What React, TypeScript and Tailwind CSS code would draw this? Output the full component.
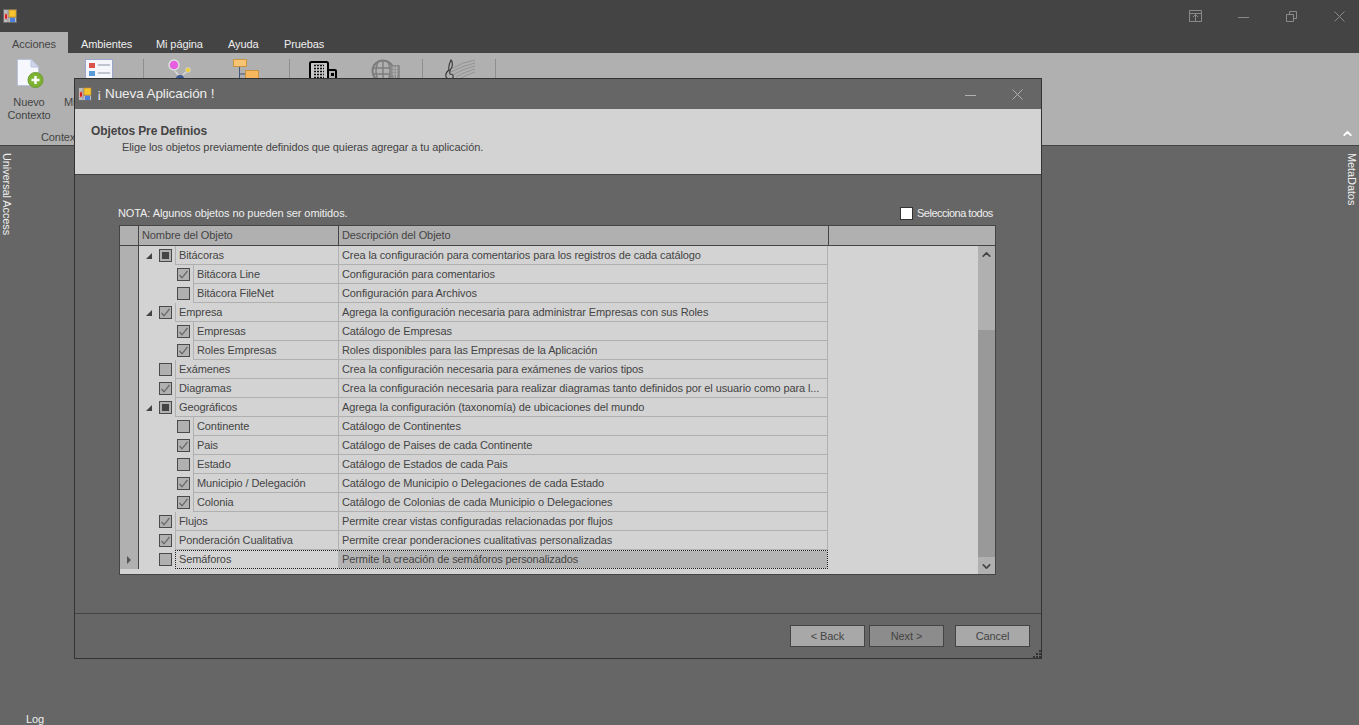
import { ChevronDown, ChevronUp } from "lucide-react";

type Check = "checked" | "mixed" | "empty";
type Row = { name: string; desc: string; level: 0 | 1; check: Check; expanded?: boolean; current?: boolean };

const rows: Row[] = [
  { name: "Bitácoras", desc: "Crea la configuración para comentarios para los registros de cada catálogo", level: 0, check: "mixed", expanded: true },
  { name: "Bitácora Line", desc: "Configuración para comentarios", level: 1, check: "checked" },
  { name: "Bitácora FileNet", desc: "Configuración para Archivos", level: 1, check: "empty" },
  { name: "Empresa", desc: "Agrega la configuración necesaria para administrar Empresas con sus Roles", level: 0, check: "checked", expanded: true },
  { name: "Empresas", desc: "Catálogo de Empresas", level: 1, check: "checked" },
  { name: "Roles Empresas", desc: "Roles disponibles para las Empresas de la Aplicación", level: 1, check: "checked" },
  { name: "Exámenes", desc: "Crea la configuración necesaria para exámenes de varios tipos", level: 0, check: "empty" },
  { name: "Diagramas", desc: "Crea la configuración necesaria para realizar diagramas tanto definidos por el usuario como para l...", level: 0, check: "checked" },
  { name: "Geográficos", desc: "Agrega la configuración (taxonomía) de ubicaciones del mundo", level: 0, check: "mixed", expanded: true },
  { name: "Continente", desc: "Catálogo de Continentes", level: 1, check: "empty" },
  { name: "Pais", desc: "Catálogo de Paises de cada Continente", level: 1, check: "checked" },
  { name: "Estado", desc: "Catálogo de Estados de cada Pais", level: 1, check: "empty" },
  { name: "Municipio / Delegación", desc: "Catálogo de Municipio o Delegaciones de cada Estado", level: 1, check: "checked" },
  { name: "Colonia", desc: "Catálogo de Colonias de cada Municipio o Delegaciones", level: 1, check: "checked" },
  { name: "Flujos", desc: "Permite crear vistas configuradas relacionadas por flujos", level: 0, check: "checked" },
  { name: "Ponderación Cualitativa", desc: "Permite crear ponderaciones cualitativas personalizadas", level: 0, check: "checked" },
  { name: "Semáforos", desc: "Permite la creación de semáforos personalizados", level: 0, check: "empty", current: true },
];

function AppIcon() {
  return (
    <svg width="14" height="14" viewBox="0 0 14 14" className="shrink-0">
      <rect width="14" height="14" fill="#bdbdbd" />
      <rect x="0.5" y="0.5" width="13" height="13" fill="none" stroke="#6c6c6c" />
      <path d="M5 1V13M1 4.5H5M1 10.5H5M5 8.5H13" stroke="#8a8a8a" strokeWidth="0.7" />
      <rect x="1.5" y="5" width="3" height="5" fill="#d3201c" stroke="#f0e0e0" strokeWidth="0.5" />
      <rect x="6" y="1" width="7" height="7" fill="#f7c52f" stroke="#b9861a" strokeWidth="0.6" />
      <rect x="7" y="9" width="5" height="4" fill="#4a80dc" />
    </svg>
  );
}

function NewDocIcon() {
  return (
    <svg width="27" height="30" viewBox="0 0 27 30">
      <path d="M.5.5H14L21.5 8V26.5H.5Z" fill="#f6f8fd" stroke="#b9c3dc" />
      <path d="M14 .5V8H21.5Z" fill="#cfd7ea" stroke="#b9c3dc" />
      <circle cx="18.5" cy="21" r="7.5" fill="#7db233" stroke="#6a9a2c" />
      <path d="M18.5 17V25M14.5 21H22.5" stroke="#fff" strokeWidth="2.4" />
    </svg>
  );
}

function ListIcon() {
  return (
    <svg width="29" height="19" viewBox="0 0 29 19">
      <rect x="0.5" y="0.5" width="27" height="24" fill="#f4f6fb" stroke="#99a6cc" />
      <rect x="4" y="4" width="6" height="5" fill="#d9534a" />
      <rect x="4" y="12" width="6" height="5" fill="#5b9bd8" />
      <path d="M13 6H25M13 14H25" stroke="#8794a8" strokeWidth="1.2" />
    </svg>
  );
}

function PinIcon() {
  return (
    <svg width="24" height="19" viewBox="0 0 24 19">
      <circle cx="6" cy="6" r="5" fill="#e85ee0" stroke="#ddd" strokeWidth="1.5" />
      <circle cx="20" cy="11" r="2.5" fill="#f2d22c" stroke="#ccc" />
      <path d="M7 12L11 17M18 13L15 16" stroke="#ddd" strokeWidth="1.4" />
      <circle cx="12" cy="20" r="4" fill="#3c5a92" />
    </svg>
  );
}

function TreeIcon() {
  return (
    <svg width="27" height="20" viewBox="0 0 27 20">
      <rect x="0.5" y="0.5" width="13" height="7" fill="#f7c476" stroke="#c99440" />
      <path d="M6.5 8V20M6.5 15H12" stroke="#44557a" />
      <rect x="12.5" y="11.5" width="13" height="9" fill="#f7b75e" stroke="#c99440" />
    </svg>
  );
}

function BuildingIcon() {
  return (
    <svg width="28" height="18" viewBox="0 0 28 18">
      <path d="M1 19V2.5Q1 1 2.5 1H17.5Q19 1 19 2.5V19" fill="#c8c8c8" stroke="#000" strokeWidth="2" />
      <path d="M5 4.5H15M5 7.5H15M5 10.5H15M5 13.5H15M5 16.5H15" stroke="#111" strokeWidth="1.6" />
      <path d="M7.5 4V18M10.5 4V18M13.5 4V18" stroke="#c8c8c8" strokeWidth="1" />
      <path d="M19 9H26Q27 9 27 10V19" fill="none" stroke="#000" strokeWidth="2" />
      <rect x="22" y="12" width="3" height="3" fill="#000" />
    </svg>
  );
}

function GlobeIcon() {
  return (
    <svg width="30" height="19" viewBox="0 0 30 19">
      <circle cx="12" cy="12" r="10.5" fill="none" stroke="#7c7c7c" strokeWidth="2" />
      <path d="M12 2V22M2 9H22M2 15H22M7 3Q3 12 7 21M17 3Q21 12 17 21" fill="none" stroke="#7c7c7c" strokeWidth="1.4" />
      <rect x="19" y="6" width="10" height="14" rx="1" fill="#8a8a8a" />
      <path d="M21 9H27M21 12H27M21 15H27M23 7V19M25.5 7V19" stroke="#b0b0b0" />
    </svg>
  );
}

function MusicIcon() {
  return (
    <svg width="32" height="20" viewBox="0 0 32 20">
      <path d="M7 10Q18 3 31 1M7 13Q18 7 31 4M9 16Q18 10 31 7M12 18Q20 13 31 10M15 20Q22 16 31 13" fill="none" stroke="#8c8c8c" strokeWidth="0.8" />
      <path d="M7 1Q4 7 5 11Q1 14 2 18Q5 22 9 19Q10 15 6 15Q5 12 8 8Q9 3 7 1Z" fill="none" stroke="#333" strokeWidth="1.1" />
    </svg>
  );
}

function RibbonSep() {
  return <div className="h-[29px] w-px shrink-0 self-start bg-[#8e8e8e]" />;
}

function CheckBox({ state }: { state: Check }) {
  return (
    <div className="flex h-[13px] w-[13px] shrink-0 items-center justify-center border border-[#4a4a4a] bg-[#b0b0b0]">
      {state === "mixed" && <div className="h-[7px] w-[7px] bg-[#444]" />}
      {state === "checked" && (
        <svg width="11" height="11" viewBox="0 0 11 11">
          <path d="M1.5 6L4 8.8L9.5 2" fill="none" stroke="#6a6a6a" strokeWidth="1.3" />
        </svg>
      )}
    </div>
  );
}

function GridRow({ row }: { row: Row }) {
  const nameStart = row.level === 0 ? "w-[36px]" : "w-[54px]";
  return (
    <div className="flex h-[19px]">
      <div className="flex w-[19px] shrink-0 items-center justify-center border-r border-[#444] bg-[#b0b0b0]">
        {row.current && <div className="h-0 w-0 border-y-[4px] border-l-[4px] border-y-transparent border-l-[#555]" />}
      </div>
      <div className={`relative flex h-full ${nameStart} shrink-0 items-center justify-end pr-[3px]`}>
        {row.expanded && <div className="absolute left-[7px] top-[7px] h-0 w-0 border-b-[6px] border-l-[6px] border-l-transparent border-b-[#444]" />}
        <CheckBox state={row.check} />
      </div>
      {row.current ? (
        <div className="flex h-[19px] w-[653px] shrink-0 border border-dotted border-[#222]">
          <div className="flex w-[162px] shrink-0 items-center pl-[3px]">{row.name}</div>
          <div className="flex flex-1 items-center bg-[#b4b4b4] pl-[4px]">{row.desc}</div>
        </div>
      ) : (
        <>
          <div className={`flex ${row.level === 0 ? "w-[164px]" : "w-[146px]"} shrink-0 items-center border-x border-b border-[#b0b0b0] pl-[3px] pt-px`}>{row.name}</div>
          <div className="flex w-[489px] shrink-0 items-center whitespace-nowrap border-r border-b border-[#b0b0b0] pl-[3px] pt-px">{row.desc}</div>
        </>
      )}
    </div>
  );
}

function WizardButton({ label, disabled }: { label: string; disabled?: boolean }) {
  return (
    <button
      type="button"
      className={`h-[22px] w-[75px] border border-[#444] ${disabled ? "bg-[#8c8c8c]" : "bg-[#a8a8a8]"} text-[#444]`}
    >
      {label}
    </button>
  );
}

export default function App() {
  return (
    <div className="relative flex h-[725px] w-[1359px] flex-col overflow-hidden bg-[#666] font-['Liberation_Sans',sans-serif] text-[11px] tracking-[-0.1px] text-[#444]">
      <div className="flex h-[32px] shrink-0 items-center bg-[#444] pl-[3px] pr-[14px]">
        <AppIcon />
        <div className="ml-auto flex items-center text-[#8a8a8a]">
          <svg width="14" height="13" viewBox="0 0 14 13" className="mr-[35px]">
            <path d="M.5.5H12.5V11.5H.5ZM.5 3.5H12.5M6.5 11V5M4 7L6.5 4.5L9 7" fill="none" stroke="currentColor" />
          </svg>
          <svg width="11" height="11" viewBox="0 0 11 11" className="mr-[37px]">
            <path d="M0 6.5H11" stroke="currentColor" />
          </svg>
          <svg width="11" height="11" viewBox="0 0 11 11" className="mr-[37px]">
            <path d="M.5 3.5H7.5V10.5H.5ZM3.5 3V.5H10.5V7.5H8" fill="none" stroke="currentColor" />
          </svg>
          <svg width="11" height="11" viewBox="0 0 11 11">
            <path d="M.5.5L10.5 10.5M10.5.5L.5 10.5" stroke="currentColor" />
          </svg>
        </div>
      </div>

      <div className="flex h-[21px] shrink-0 items-center bg-[#444] text-[#eee]">
        <div className="flex h-full w-[68px] items-center justify-center bg-[#b0b0b0] pt-[3px] text-[#444]">Acciones</div>
        <div className="ml-[13px] w-[75px] pt-[3px]">Ambientes</div>
        <div className="w-[72px] pt-[3px]">Mi página</div>
        <div className="w-[56px] pt-[3px]">Ayuda</div>
        <div className="pt-[3px]">Pruebas</div>
      </div>

      <div className="relative flex h-[93px] shrink-0 border-b border-[#444] bg-[#b0b0b0] pt-[6px]">
        <div className="ml-[6px] flex w-[46px] flex-col items-center">
          <div className="h-[36px] w-full pl-[11px]"><NewDocIcon /></div>
          <div className="mt-[1px] text-center leading-[13px]">Nuevo<br />Contexto</div>
        </div>
        <div className="ml-[12px] flex w-[79px] flex-col">
          <div className="h-[36px] pl-[21px]"><ListIcon /></div>
          <div className="mt-[1px] leading-[13px]">Mi</div>
        </div>
        <RibbonSep />
        <div className="ml-[24px] w-[65px]"><PinIcon /></div>
        <div className="w-[56px]"><TreeIcon /></div>
        <RibbonSep />
        <div className="ml-[19px] w-[62px] pt-[2px]"><BuildingIcon /></div>
        <div className="w-[51px]"><GlobeIcon /></div>
        <RibbonSep />
        <div className="ml-[21px] w-[51px]"><MusicIcon /></div>
        <RibbonSep />
        <div className="absolute left-[41px] top-[76px]">Contexto</div>
        <ChevronUp size={13} strokeWidth={3.5} className="absolute right-[5px] top-[74px] text-white" />
      </div>

      <div className="flex flex-1 justify-between text-[#eee]">
        <div className="flex flex-col items-start justify-between pl-[1px] pt-[7px]">
          <div className="leading-[12px] [writing-mode:vertical-rl]">Universal Access</div>
          <div className="-mb-[1px] ml-[25px] leading-[14px]">Log</div>
        </div>
        <div className="pr-[1px] pt-[7px]">
          <div className="leading-[12px] [writing-mode:vertical-rl]">MetaDatos</div>
        </div>
      </div>

      <div className="absolute left-[74px] top-[78px] flex h-[581px] w-[968px] flex-col border border-[#333] bg-[#666]">
        <div className="flex h-[30px] shrink-0 items-center pl-[3px] pr-[18px] text-[13.5px] text-[#eee]">
          <AppIcon />
          <span className="ml-[5px]">¡ Nueva Aplicación !</span>
          <div className="ml-auto flex items-center text-[#b0b0b0]">
            <svg width="11" height="11" viewBox="0 0 11 11" className="mr-[36px]">
              <path d="M0 6.5H11" stroke="currentColor" />
            </svg>
            <svg width="11" height="11" viewBox="0 0 11 11">
              <path d="M.5.5L10.5 10.5M10.5.5L.5 10.5" stroke="currentColor" />
            </svg>
          </div>
        </div>

        <div className="h-[66px] shrink-0 border-b border-[#444] bg-[#d3d3d3] pl-[16px] pt-[15px]">
          <div className="text-[12px] font-bold leading-[15px]">Objetos Pre Definios</div>
          <div className="ml-[31px] mt-[1px] leading-[15px]">Elige los objetos previamente definidos que quieras agregar a tu aplicación.</div>
        </div>

        <div className="flex flex-1 flex-col px-[44px] pt-[28px] text-[#eee]">
          <div className="flex h-[22px] items-start">
            <span className="-ml-px leading-[20px]">NOTA: Algunos objetos no pueden ser omitidos.</span>
            <div className="ml-auto mr-[5px] mt-[2px] flex items-center">
              <div className="h-[13px] w-[13px] border border-[#333] bg-white" />
              <span className="ml-[4px] w-[75px] whitespace-nowrap tracking-[-0.5px]">Selecciona todos</span>
            </div>
          </div>

          <div className="flex h-[350px] w-[877px] flex-col border border-[#444] bg-[#d3d3d3] text-[#444]">
            <div className="flex h-[20px] shrink-0 border-b border-[#444] bg-[#b0b0b0]">
              <div className="w-[19px] shrink-0 border-r border-[#444]" />
              <div className="flex w-[200px] shrink-0 items-center border-r border-[#444] pl-[3px]">Nombre del Objeto</div>
              <div className="flex w-[490px] shrink-0 items-center border-r border-[#444] pl-[3px]">Descripción del Objeto</div>
            </div>
            <div className="flex min-h-0 flex-1">
              <div className="w-[858px] shrink-0">
                {rows.map((row) => (
                  <GridRow key={row.name} row={row} />
                ))}
              </div>
              <div className="flex w-[17px] shrink-0 flex-col bg-[#b0b0b0] text-[#444]">
                <div className="flex h-[84px] justify-center pt-[2px]">
                  <ChevronUp size={13} strokeWidth={3} />
                </div>
                <div className="h-[227px] bg-[#999]" />
                <div className="flex flex-1 justify-center pt-[3px]">
                  <ChevronDown size={13} strokeWidth={3} />
                </div>
              </div>
            </div>
          </div>
        </div>

        <div className="relative flex h-[45px] shrink-0 items-start gap-[4px] border-t border-[#444] pl-[715px] pt-[11px]">
          <WizardButton label="< Back" />
          <WizardButton label="Next >" disabled />
          <div className="ml-[7px]">
            <WizardButton label="Cancel" />
          </div>
          <svg width="8" height="8" viewBox="0 0 8 8" className="absolute bottom-0 right-0 text-[#333]">
            <path d="M6 0h2v2H6ZM3 3h2v2H3ZM6 3h2v2H6ZM0 6h2v2H0ZM3 6h2v2H3ZM6 6h2v2H6Z" fill="currentColor" />
          </svg>
        </div>
      </div>
    </div>
  );
}
